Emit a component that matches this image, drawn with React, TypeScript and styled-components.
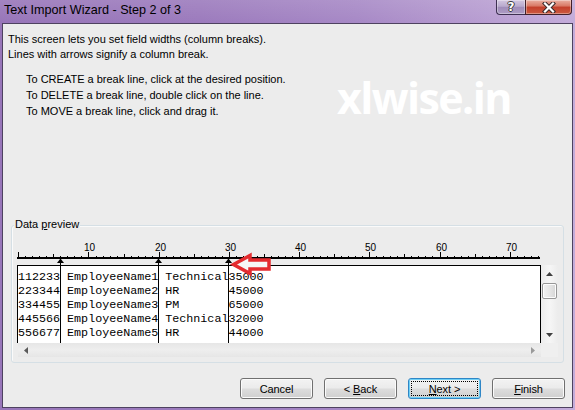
import React from 'react';
import styled, { createGlobalStyle } from 'styled-components';

const Global = createGlobalStyle`
  html, body { margin: 0; padding: 0; background: #ffffff; }
  body { font-family: "Liberation Sans", Arial, sans-serif; }
  #root { width: 575px; height: 410px; }
`;

const Window = styled.div`
  width: 575px;
  height: 410px;
  box-sizing: border-box;
  display: flex;
  flex-direction: column;
  overflow: hidden;
  background:
    linear-gradient(180deg, rgba(255,255,255,0.10) 0px, rgba(255,255,255,0) 22px),
    linear-gradient(90deg, #9876b9 0%, #9c7bbd 35%, #a789c6 62%, #b99fd2 86%, #c4acda 100%);
`;

const TitleBar = styled.div`
  height: 23px;
  flex: none;
  display: flex;
  align-items: flex-start;
  justify-content: space-between;
  padding-left: 4px;
  padding-right: 3px;
`;

const TitleText = styled.span`
  font-size: 12.6px;
  line-height: 21px;
  color: #000;
  white-space: nowrap;
`;

const Controls = styled.div`
  display: flex;
  height: 15px;
`;

const CaptionButton = styled.div<{ $kind: 'help' | 'close' }>`
  box-sizing: border-box;
  height: 15px;
  width: ${(p) => (p.$kind === 'help' ? 29 : 47)}px;
  display: flex;
  align-items: center;
  justify-content: center;
  border: 1px solid ${(p) => (p.$kind === 'help' ? '#3e3052' : '#42202a')};
  border-top: none;
  ${(p) => (p.$kind === 'help' ? 'border-right: none; border-bottom-left-radius: 4px;' : 'border-bottom-right-radius: 4px;')}
  background: ${(p) =>
    p.$kind === 'help'
      ? 'linear-gradient(180deg, #d2c6e0 0%, #b9aacd 45%, #a08dba 52%, #ad9cc4 100%)'
      : 'linear-gradient(180deg, #eab0a2 0%, #d97a66 42%, #c4402b 52%, #cc5a40 100%)'};
  box-shadow: inset 0 0 0 1px rgba(255,255,255,0.35);
`;

const HelpGlyph = styled.span`
  font-family: "DejaVu Sans", sans-serif;
  font-weight: bold;
  font-size: 12px;
  line-height: 14px;
  color: #fff;
  text-shadow: -1px 0 #3a3a3a, 1px 0 #3a3a3a, 0 -1px #3a3a3a, 0 1px #3a3a3a;
`;

const Client = styled.div`
  flex: 1;
  position: relative;
  margin: 0 2px 2px 2px;
  border: 1px solid #4e4260;
  background: #ececec;
  display: flex;
  flex-direction: column;
`;

const Intro = styled.div`
  padding: 8px 0 0 5px;
  font-size: 11px;
  color: #000;
`;

const Para = styled.p<{ $lh: number; $indent: number; $top: number }>`
  margin: ${(p) => p.$top}px 0 0 0;
  line-height: ${(p) => p.$lh}px;
  padding-left: ${(p) => p.$indent}px;
  white-space: nowrap;
`;

const Watermark = styled.div`
  position: absolute;
  left: 334px;
  top: 52px;
  font-family: "Open Sans", "Liberation Sans", sans-serif;
  font-weight: 700;
  font-size: 43px;
  line-height: 43px;
  letter-spacing: -1.6px;
  color: #ffffff;
  pointer-events: none;
`;

const GroupBox = styled.div`
  position: relative;
  box-sizing: border-box;
  height: 138px;
  margin: 106px 8px 0 8px;
  padding: 14px 5px 0 5px;
  border: 1px solid #d5dfe5;
  border-radius: 3px;
  box-shadow: inset 1px 1px 0 #fafafa;
`;

const Legend = styled.span`
  position: absolute;
  left: 2px;
  top: -8px;
  padding: 0 1px;
  background: #ececec;
  font-size: 11px;
  line-height: 13px;
  color: #000;
`;

const PreviewArea = styled.div`
  position: relative;
  width: 541px;
`;

const RulerSvg = styled.svg`
  display: block;
  width: 541px;
  height: 25px;
`;

const Frame = styled.div`
  display: grid;
  grid-template-columns: 524px 17px;
  grid-template-rows: 78px 14px;
`;

const DataArea = styled.div`
  box-sizing: border-box;
  border: 1px solid #000;
  border-bottom: none;
  background: #fff;
  padding-top: 4px;
  overflow: hidden;
`;

const DataRow = styled.div`
  font-family: "Liberation Mono", "Courier New", monospace;
  font-size: 11.7px;
  line-height: 14px;
  white-space: pre;
  color: #000;
`;

const VScroll = styled.div`
  display: flex;
  flex-direction: column;
  align-items: center;
  background: linear-gradient(90deg, #ececec, #f6f6f6 50%, #ececec);
`;

const ArrowBox = styled.div`
  height: 17px;
  width: 17px;
  display: flex;
  align-items: center;
  justify-content: center;
  flex: none;
`;

const Thumb = styled.div`
  box-sizing: border-box;
  width: 15px;
  height: 16px;
  margin-top: 1px;
  border: 1px solid #979797;
  border-radius: 2px;
  background: linear-gradient(90deg, #f2f2f2 0%, #e6e6e6 50%, #d6d6d6 100%);
  box-shadow: inset 0 0 0 1px #fdfdfd;
`;

const Spacer = styled.div`
  flex: 1;
`;

const HScroll = styled.div`
  margin-left: 1px;
  display: flex;
  align-items: center;
  justify-content: space-between;
  padding: 0 6px;
  background: linear-gradient(180deg, #e6e6e6, #eeeeee 50%, #e6e6e6);
`;

const Corner = styled.div`
  background: #efefef;
`;

const Overlay = styled.svg`
  position: absolute;
  left: 0;
  top: 0;
  pointer-events: none;
  overflow: visible;
`;

const ButtonRow = styled.div`
  display: flex;
  justify-content: flex-end;
  gap: 11px;
  margin-top: 15px;
  padding-right: 7px;
`;

const Button = styled.div<{ $default?: boolean }>`
  box-sizing: border-box;
  width: 73px;
  height: 21px;
  display: flex;
  padding: 2px;
  border: 1px solid ${(p) => (p.$default ? '#2f86c6' : '#707070')};
  border-radius: 3px;
  background: linear-gradient(180deg, #f3f3f3 0%, #ebebeb 48%, #dddddd 52%, #cfcfcf 100%);
  box-shadow: inset 0 0 0 1px ${(p) => (p.$default ? '#6fd0f6' : '#fbfbfb')};
`;

const ButtonLabel = styled.span<{ $focus?: boolean }>`
  flex: 1;
  display: flex;
  align-items: center;
  justify-content: center;
  border: 1px dotted ${(p) => (p.$focus ? '#000' : 'transparent')};
  font-size: 11px;
  letter-spacing: -0.1px;
  color: #000;
  white-space: pre;
`;

const rows = [
  '112233 EmployeeName1 Technical35000',
  '223344 EmployeeName2 HR       45000',
  '334455 EmployeeName3 PM       65000',
  '445566 EmployeeName4 Technical32000',
  '556677 EmployeeName5 HR       44000',
];

const breaks = [6, 20, 30];

function Ruler() {
  const ticks = [];
  for (let c = 0; c <= 74; c++) {
    const x = Math.round(18.3 + 7.02 * c) - 17;
    let y = 16;
    let h = 1;
    if (c % 10 === 0) {
      y = 12;
      h = 6;
    } else if (c % 5 === 0) {
      y = 14;
      h = 3;
    }
    ticks.push(<rect key={c} x={x} y={y} width={1} height={h} fill="#000" />);
  }
  const labels = [10, 20, 30, 40, 50, 60, 70].map((c) => {
    const x = Math.round(18.3 + 7.02 * c) - 17;
    return (
      <text
        key={c}
        x={x + 1.5}
        y={11}
        textAnchor="middle"
        fontFamily='"Liberation Sans", Arial, sans-serif'
        fontSize="10"
        fill="#000"
      >
        {c}
      </text>
    );
  });
  return (
    <RulerSvg viewBox="0 0 541 25">
      <rect x={0} y={17} width={523} height={2} fill="#000" />
      {ticks}
      {labels}
    </RulerSvg>
  );
}

function Breaks() {
  return (
    <Overlay width={541} height={104} viewBox="0 0 541 104">
      {breaks.map((c) => {
        const x = Math.floor(18 + 7.02 * c) - 17;
        return (
          <g key={c}>
            <rect x={x} y={22} width={1} height={81} fill="#000" />
            <polygon points={`${x + 0.5},18.5 ${x + 4},23 ${x - 3},23`} fill="#000" />
          </g>
        );
      })}
      <polygon
        points="216.5,24.5 233,15.5 233,20 252,20 252,29 233,29 233,33.5"
        fill="#f6f6f6"
        stroke="#e42b2f"
        strokeWidth="3.5"
        strokeLinejoin="miter"
      />
    </Overlay>
  );
}

function Tri({ dir, color }: { dir: 'up' | 'down' | 'left' | 'right'; color: string }) {
  const pts = {
    up: '0,4 3.5,0 7,4',
    down: '0,0 7,0 3.5,4',
    left: '4,0 4,7 0,3.5',
    right: '0,0 0,7 4,3.5',
  }[dir];
  const w = dir === 'up' || dir === 'down' ? 7 : 4;
  const h = dir === 'up' || dir === 'down' ? 4 : 7;
  return (
    <svg width={w} height={h} viewBox={`0 0 ${w} ${h}`}>
      <polygon points={pts} fill={color} />
    </svg>
  );
}

export default function App() {
  return (
    <>
      <Global />
      <Window>
        <TitleBar>
          <TitleText>Text Import Wizard - Step 2 of 3</TitleText>
          <Controls>
            <CaptionButton $kind="help">
              <HelpGlyph>?</HelpGlyph>
            </CaptionButton>
            <CaptionButton $kind="close">
              <svg width="14" height="11" viewBox="0 0 14 11">
                <path d="M3 1.5 L11 9.5 M11 1.5 L3 9.5" stroke="#3a2a2a" strokeWidth="4.2" strokeLinecap="square" />
                <path d="M3 1.5 L11 9.5 M11 1.5 L3 9.5" stroke="#ffffff" strokeWidth="2.2" strokeLinecap="square" />
              </svg>
            </CaptionButton>
          </Controls>
        </TitleBar>
        <Client>
          <Intro>
            <Para $lh={15} $indent={0} $top={0}>
              This screen lets you set field widths (column breaks).
              <br />
              Lines with arrows signify a column break.
            </Para>
            <Para $lh={16} $indent={18} $top={9}>
              To CREATE a break line, click at the desired position.
              <br />
              To DELETE a break line, double click on the line.
              <br />
              To MOVE a break line, click and drag it.
            </Para>
          </Intro>
          <Watermark>xlwise.in</Watermark>
          <GroupBox>
            <Legend>
              Data <u>p</u>review
            </Legend>
            <PreviewArea>
              <Ruler />
              <Frame>
                <DataArea>
                  {rows.map((r) => (
                    <DataRow key={r}>{r}</DataRow>
                  ))}
                </DataArea>
                <VScroll>
                  <ArrowBox>
                    <Tri dir="up" color="#404040" />
                  </ArrowBox>
                  <Thumb />
                  <Spacer />
                  <ArrowBox>
                    <Tri dir="down" color="#404040" />
                  </ArrowBox>
                </VScroll>
                <HScroll>
                  <Tri dir="left" color="#5a5a5a" />
                  <Tri dir="right" color="#9a9a9a" />
                </HScroll>
                <Corner />
              </Frame>
              <Breaks />
            </PreviewArea>
          </GroupBox>
          <ButtonRow>
            <Button>
              <ButtonLabel>Cancel</ButtonLabel>
            </Button>
            <Button>
              <ButtonLabel>
                {'< '}
                <u>B</u>ack
              </ButtonLabel>
            </Button>
            <Button $default>
              <ButtonLabel $focus>
                <u>N</u>ext {'>'}
              </ButtonLabel>
            </Button>
            <Button>
              <ButtonLabel>
                <u>F</u>inish
              </ButtonLabel>
            </Button>
          </ButtonRow>
        </Client>
      </Window>
    </>
  );
}
